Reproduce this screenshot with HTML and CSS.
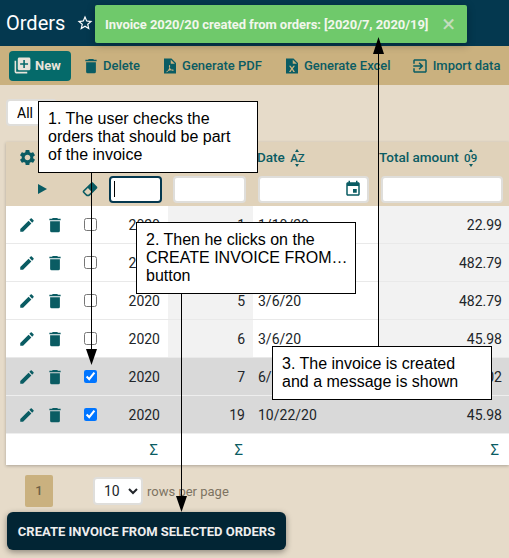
FILE: index.html
```html
<!DOCTYPE html>
<html lang="en">
<head>
    <meta charset="UTF-8">
    <title>Orders</title>
    <link rel="stylesheet" href="styles.css">
</head>
<body>
    <header class="topbar">
        <h1>Orders</h1>
        <svg class="star" viewBox="0 0 24 24"><path d="M22 9.24l-7.19-.62L12 2 9.19 8.63 2 9.24l5.46 4.73L5.82 21 12 17.27 18.18 21l-1.63-7.03L22 9.24zM12 15.4l-3.76 2.27 1-4.28-3.32-2.88 4.38-.38L12 6.1l1.71 4.04 4.38.38-3.32 2.88 1 4.28L12 15.4z"/></svg>
    </header>

    <nav class="toolbar">
        <button class="btn-new">
            <svg viewBox="0 0 24 24"><path d="M4 6H2v14c0 1.1.9 2 2 2h14v-2H4V6zm16-4H8c-1.1 0-2 .9-2 2v12c0 1.1.9 2 2 2h12c1.1 0 2-.9 2-2V4c0-1.1-.9-2-2-2zm-1 9h-4v4h-2v-4H9V9h4V5h2v4h4v2z"/></svg>
            New
        </button>
        <a class="tool">
            <svg viewBox="0 0 24 24"><use href="#bin"/></svg>
            Delete
        </a>
        <a class="tool">
            <svg viewBox="0 0 24 24"><path fill-rule="evenodd" d="M6 2h8l6 6v14H4V2h2zm7 1.5V9h5.5L13 3.5zM7 19.5c1.5-.5 3-2.5 4-5-.5-1.5-.6-2.8-.2-3.5.5-.6 1.4-.3 1.4 1 0 .7-.2 1.5-.5 2.4.6 1.1 1.400 2 2.300 2.500 1.400-.2 2.800 0 2.900.8.1.9-1.700 1-3.300-.2-1.300.2-2.800.6-4 1.100-1 1.500-2 2-2.600 1.400z"/></svg>
            Generate PDF
        </a>
        <a class="tool">
            <svg viewBox="0 0 24 24"><path fill-rule="evenodd" d="M5 2h9l6 6v14H4V2h1zm8 1.5V9h5.500L13 3.500zM8 11.500l2.800 4.200L8 20h2.200l1.800-2.900 1.800 2.900H16l-2.800-4.300 2.800-4.200h-2.200L12 14.300l-1.800-2.800H8z"/></svg>
            Generate Excel
        </a>
        <a class="tool tool-import">
            <svg viewBox="0 0 24 24"><path d="M10.090 15.590L11.500 17l5-5-5-5-1.410 1.410L12.670 11H3v2h9.670l-2.580 2.590zM19 3H5c-1.110 0-2 .9-2 2v4h2V5h14v14H5v-4H3v4c0 1.100.89 2 2 2h14c1.100 0 2-.9 2-2V5c0-1.100-.9-2-2-2z"/></svg>
            Import data
        </a>
    </nav>

    <main class="content">
        <select class="view-select"><option>All</option></select>

        <table class="orders">
            <colgroup>
                <col class="c-edit"><col class="c-del"><col class="c-check"><col class="c-year"><col class="c-number"><col class="c-date"><col class="c-total">
            </colgroup>
            <thead>
                <tr class="head-titles">
                    <th class="gear-cell"><svg class="icon gear" viewBox="0 0 24 24"><path d="M19.140 12.940c.04-.3.06-.61.06-.94 0-.32-.02-.64-.07-.94l2.030-1.580c.18-.14.23-.41.12-.61l-1.920-3.320c-.12-.22-.37-.29-.59-.22l-2.390.96c-.5-.38-1.030-.7-1.620-.94l-.36-2.540c-.04-.24-.24-.41-.48-.41h-3.840c-.24 0-.43.17-.47.41l-.36 2.540c-.59.24-1.130.57-1.620.94l-2.390-.96c-.22-.08-.47 0-.59.22L2.740 8.870c-.12.21-.08.47.12.61l2.030 1.580c-.05.3-.09.63-.09.94s.02.64.07.94l-2.030 1.580c-.18.14-.23.41-.12.61l1.920 3.320c.12.22.37.29.59.22l2.390-.96c.5.38 1.030.7 1.620.94l.36 2.540c.05.24.24.41.48.41h3.840c.24 0 .44-.17.47-.41l.36-2.540c.59-.24 1.130-.56 1.620-.94l2.390.96c.22.08.47 0 .59-.22l1.920-3.320c.12-.22.07-.47-.12-.61l-2.010-1.580zM12 15.600c-1.980 0-3.600-1.620-3.600-3.600s1.620-3.600 3.600-3.600 3.600 1.620 3.600 3.600-1.620 3.600-3.600 3.600z"/></svg></th>
                    <th></th>
                    <th></th>
                    <th>Year</th>
                    <th>Number</th>
                    <th class="th-date">Date <span class="sort">AZ</span></th>
                    <th>Total amount <span class="sort">09</span></th>
                </tr>
                <tr class="head-filters">
                    <th></th>
                    <th class="play-cell"><span class="play"></span></th>
                    <th><svg class="icon eraser" viewBox="0 0 24 24"><path d="M16.240 3.560l4.950 4.940c.78.790.78 2.050 0 2.840L12 20.530c-1.560 1.560-4.090 1.560-5.660 0L2.810 17c-.78-.79-.78-2.050 0-2.840l10.600-10.600c.79-.78 2.050-.78 2.830 0zM4.220 15.580l3.540 3.530c.78.790 2.040.79 2.830 0l3.530-3.530-4.950-4.950-4.950 4.950z"/></svg></th>
                    <th><input class="filter focused" type="text"></th>
                    <th><input class="filter f-number" type="text"></th>
                    <th>
                        <div class="date-filter">
                            <svg class="icon" viewBox="0 0 24 24"><path d="M17 12h-5v5h5v-5zM16 1v2H8V1H6v2H5c-1.110 0-1.990.9-1.990 2L3 19c0 1.100.89 2 2 2h14c1.100 0 2-.9 2-2V5c0-1.100-.9-2-2-2h-1V1h-2zm3 18H5V8h14v11z"/></svg>
                        </div>
                    </th>
                    <th><input class="filter f-total" type="text"></th>
                </tr>
            </thead>
            <tbody>
                <tr>
                    <td class="act"><svg class="icon" viewBox="0 0 24 24"><use href="#pencil"/></svg></td>
                    <td class="act"><svg class="icon" viewBox="0 0 24 24"><use href="#bin"/></svg></td>
                    <td class="act"><span class="box"></span></td>
                    <td class="num">2020</td><td class="num shade">1</td><td class="date">1/10/20</td><td class="num last shade">22.99</td>
                </tr>
                <tr>
                    <td class="act"><svg class="icon" viewBox="0 0 24 24"><use href="#pencil"/></svg></td>
                    <td class="act"><svg class="icon" viewBox="0 0 24 24"><use href="#bin"/></svg></td>
                    <td class="act"><span class="box"></span></td>
                    <td class="num">2020</td><td class="num shade">3</td><td class="date">2/4/20</td><td class="num last shade">482.79</td>
                </tr>
                <tr>
                    <td class="act"><svg class="icon" viewBox="0 0 24 24"><use href="#pencil"/></svg></td>
                    <td class="act"><svg class="icon" viewBox="0 0 24 24"><use href="#bin"/></svg></td>
                    <td class="act"><span class="box"></span></td>
                    <td class="num">2020</td><td class="num shade">5</td><td class="date">3/6/20</td><td class="num last shade">482.79</td>
                </tr>
                <tr>
                    <td class="act"><svg class="icon" viewBox="0 0 24 24"><use href="#pencil"/></svg></td>
                    <td class="act"><svg class="icon" viewBox="0 0 24 24"><use href="#bin"/></svg></td>
                    <td class="act"><span class="box"></span></td>
                    <td class="num">2020</td><td class="num shade">6</td><td class="date">3/6/20</td><td class="num last shade">45.98</td>
                </tr>
                <tr class="picked">
                    <td class="act"><svg class="icon" viewBox="0 0 24 24"><use href="#pencil"/></svg></td>
                    <td class="act"><svg class="icon" viewBox="0 0 24 24"><use href="#bin"/></svg></td>
                    <td class="act"><input class="tick" type="checkbox" checked></td>
                    <td class="num">2020</td><td class="num">7</td><td class="date">6/15/20</td><td class="num last">68.02</td>
                </tr>
                <tr class="picked">
                    <td class="act"><svg class="icon" viewBox="0 0 24 24"><use href="#pencil"/></svg></td>
                    <td class="act"><svg class="icon" viewBox="0 0 24 24"><use href="#bin"/></svg></td>
                    <td class="act"><input class="tick" type="checkbox" checked></td>
                    <td class="num">2020</td><td class="num">19</td><td class="date">10/22/20</td><td class="num last">45.98</td>
                </tr>
            </tbody>
            <tfoot>
                <tr>
                    <td></td><td></td><td></td>
                    <td class="sum">Σ</td><td class="sum">Σ</td><td></td><td class="sum">Σ</td>
                </tr>
            </tfoot>
        </table>

        <div class="pager">
            <span class="page-no">1</span>
            <select class="rows-select"><option>10</option></select>
            <span class="rows-label">rows per page</span>
        </div>

        <button class="btn-create">CREATE INVOICE FROM SELECTED ORDERS</button>
    </main>

    <!-- shared icons -->
    <svg class="defs" width="0" height="0">
        <symbol id="pencil" viewBox="0 0 24 24"><path d="M3 17.250V21h3.750L17.810 9.940l-3.750-3.750L3 17.250zM20.710 7.040c.39-.39.39-1.020 0-1.410l-2.340-2.340c-.39-.39-1.020-.39-1.410 0l-1.830 1.830 3.750 3.750 1.830-1.830z"/></symbol>
        <symbol id="bin" viewBox="0 0 24 24"><path d="M5.500 19.500a2 2 0 0 0 2 2h9a2 2 0 0 0 2-2V7h-13v12.500zM19.500 3.500H16l-1-1H9l-1 1H4.500v2h15v-2z"/></symbol>
    </svg>

    <div class="toast">
        <span>Invoice 2020/20 created from orders: [2020/7, 2020/19]</span>
        <span class="toast-close">×</span>
    </div>

    <!-- annotations drawn over the app -->
    <svg class="arrows" width="509" height="558" viewBox="0 0 509 558">
        <path class="line" d="M91.500 172V350M181.500 293V498M378.500 346V52"/>
        <path d="M86 349h11l-5.500 16zM176 496h11l-5.500 16zM373 54h11l-5.500-17z"/>
    </svg>
    <div class="note note-1">1. The user checks the orders that should be part of the invoice</div>
    <div class="note note-2">2. Then he clicks on the CREATE INVOICE FROM… button</div>
    <div class="note note-3">3. The invoice is created and a message is shown</div>
</body>
</html>
```

FILE: styles.css
```css
* {
    margin: 0;
    padding: 0;
    box-sizing: border-box;
}

html, body {
    height: 558px;
    overflow: hidden;
}

body {
    position: relative;
    background-color: #e6dbc9;
    font-family: Roboto, sans-serif;
    font-size: 14px;
    color: #212529;
}

svg {
    fill: currentColor;
}

.defs {
    position: absolute;
}

.topbar {
    display: flex;
    align-items: center;
    height: 46px;
    padding-left: 6px;
    background-color: #04384f;
    color: #fff;
}

.topbar h1 {
    font-size: 20px;
    font-weight: 400;
}

.star {
    width: 18px;
    height: 18px;
    margin-left: 11px;
}

.toolbar {
    display: flex;
    align-items: center;
    height: 39px;
    padding-left: 9px;
    background-color: #cab17f;
    color: #0a5c63;
    font-weight: 500;
    font-size: 13px;
    white-space: nowrap;
}

.toolbar svg {
    width: 18px;
    height: 18px;
}

.toolbar .btn-new svg {
    width: 19px;
    height: 19px;
}

.btn-new {
    display: flex;
    align-items: center;
    gap: 3px;
    width: 62px;
    height: 30px;
    margin-right: -10px;
    padding-left: 4px;
    border: 0;
    border-radius: 4px;
    background-color: #056a6a;
    color: #e8e4da;
    font: 700 13px Roboto, sans-serif;
}

.tool {
    display: flex;
    align-items: center;
    gap: 3px;
    margin-left: 21px;
}

.tool-import {
    gap: 4px;
    margin-left: 20px;
}

.content {
    padding: 14px 0 0 6px;
}

.view-select {
    display: block;
    width: 51px;
    height: 27px;
    padding-left: 9px;
    border: 2px solid #dfdedb;
    border-radius: 4px;
    background: #fff;
    font: 14px Roboto, sans-serif;
    appearance: none;
}

.orders {
    width: 503px;
    margin-top: 16px;
    table-layout: fixed;
    border-collapse: separate;
    border-spacing: 0;
    background-color: #fff;
    box-shadow: 0 1px 3px rgba(0, 0, 0, .25);
}

.c-edit { width: 32px; }
.c-del { width: 35px; }
.c-check { width: 35px; }
.c-year { width: 60px; }
.c-number { width: 85px; }
.c-date { width: 126px; }
.c-total { width: 130px; }

thead {
    background-color: #e0d2ba;
    color: #0a5c63;
}

th {
    font-size: 13.500px;
    font-weight: 500;
    text-align: left;
    vertical-align: middle;
    white-space: nowrap;
}

.th-date {
    padding-left: 4px;
}

.head-titles {
    height: 30px;
}

.head-filters {
    height: 34px;
}

.icon {
    display: block;
    width: 18px;
    height: 18px;
    color: #0a5c63;
}

.gear-cell {
    padding-left: 12px;
}

.gear {
    width: 19px;
    height: 19px;
}

.play {
    display: block;
    width: 0;
    border-left: 9px solid #0a5c63;
    border-top: 5px solid transparent;
    border-bottom: 5px solid transparent;
}

.head-filters th:nth-child(3) .icon {
    margin-left: 8px;
}

.sort {
    display: inline-block;
    position: relative;
    margin-left: 2px;
    font-size: 11.500px;
}

.sort::before,
.sort::after {
    content: "";
    position: absolute;
    left: 50%;
    margin-left: -2px;
    border-left: 2.500px solid transparent;
    border-right: 2.500px solid transparent;
}

.sort::before {
    top: -2px;
    border-bottom: 3px solid #0a5c63;
}

.sort::after {
    bottom: -2px;
    border-top: 3px solid #0a5c63;
}

.filter {
    display: block;
    width: 53px;
    height: 27px;
    border: 2px solid #dfdedb;
    border-radius: 4px;
    background: #fff;
    outline: 0;
}

.focused {
    margin-left: 1px;
    border-color: #04384f;
    background: linear-gradient(#000, #000) 3px 50% / 1px 16px no-repeat, #fff;
}

.f-number {
    width: 73px;
    margin-left: 5px;
}

.f-total {
    width: 122px;
    margin-left: 2px;
}

.date-filter {
    display: flex;
    align-items: center;
    justify-content: flex-end;
    width: 111px;
    height: 27px;
    margin-left: 5px;
    padding-right: 5px;
    border: 2px solid #dfdedb;
    border-radius: 4px;
    background: #fff;
}

tbody tr {
    height: 38px;
}

td {
    vertical-align: middle;
}

tbody td {
    border-bottom: 1px solid #e9e9e9;
}

td:nth-child(1) .icon {
    margin-left: 12px;
}

td:nth-child(2) .icon {
    margin-left: 8px;
}

.box {
    display: block;
    width: 13px;
    height: 13px;
    margin-left: 11px;
    border: 1px solid #767676;
    border-radius: 2.500px;
}

.tick {
    display: block;
    width: 13px;
    height: 13px;
    margin-left: 11px;
}

.num {
    padding-right: 8px;
    text-align: right;
}

.last {
    padding-right: 7px;
}

.shade {
    background-color: #f2f2f2;
}

.date {
    padding-left: 5px;
}

.picked td {
    background-color: #d9d9d9;
    border-bottom-color: #eee;
}

tfoot tr {
    height: 31px;
}

.sum {
    padding-right: 10px;
    text-align: right;
    color: #0a5c63;
    font-size: 15px;
}

.pager {
    display: flex;
    align-items: center;
    height: 32px;
    margin-top: 10px;
    padding-left: 19px;
    color: #7d7362;
    font-size: 13px;
}

.page-no {
    width: 28px;
    height: 32px;
    border-radius: 2px;
    background-color: #cab17f;
    color: #6e6146;
    line-height: 32px;
    text-align: center;
    font-weight: 500;
}

.rows-select {
    width: 50px;
    height: 28px;
    margin-left: 40px;
    padding-left: 5px;
    border: 2px solid #dfdedb;
    border-radius: 4px;
    background: #fff;
    color: #212529;
    font: 14px Roboto, sans-serif;
}

.rows-label {
    margin-left: 4px;
}

.btn-create {
    display: block;
    width: 279px;
    height: 38px;
    margin: 5px 0 0 1px;
    border: 0;
    border-radius: 6px;
    background-color: #022534;
    color: #eee;
    font: 700 13px Roboto, sans-serif;
    box-shadow: 0 2px 6px rgba(0, 0, 0, .4);
}

.toast {
    display: flex;
    align-items: center;
    justify-content: space-between;
    position: absolute;
    top: 5px;
    left: 95px;
    width: 372px;
    height: 38px;
    padding: 0 12px 0 10px;
    border-radius: 2px;
    background-color: #6fc96b;
    color: #f2f7ec;
    font-weight: 700;
    font-size: 13px;
    letter-spacing: -.06px;
    white-space: nowrap;
    box-shadow: 0 2px 8px rgba(0, 0, 0, .3);
}

.toast-close {
    color: #c3dcbd;
    font-size: 24px;
    font-weight: 400;
}

.arrows {
    position: absolute;
    top: 0;
    left: 0;
    fill: #000;
}

.line {
    fill: none;
    stroke: #000;
}

.note {
    position: absolute;
    width: 220px;
    padding: 8px 9px;
    border: 1px solid #000;
    background-color: #fff;
    color: #000;
    font-family: "Liberation Sans", sans-serif;
    font-size: 16px;
    line-height: 18px;
}

.note-1 {
    top: 101px;
    left: 38px;
    height: 72px;
}

.note-2 {
    top: 222px;
    left: 136px;
    height: 72px;
    padding-right: 0;
}

.note-3 {
    top: 346px;
    left: 272px;
    height: 54px;
}
```
